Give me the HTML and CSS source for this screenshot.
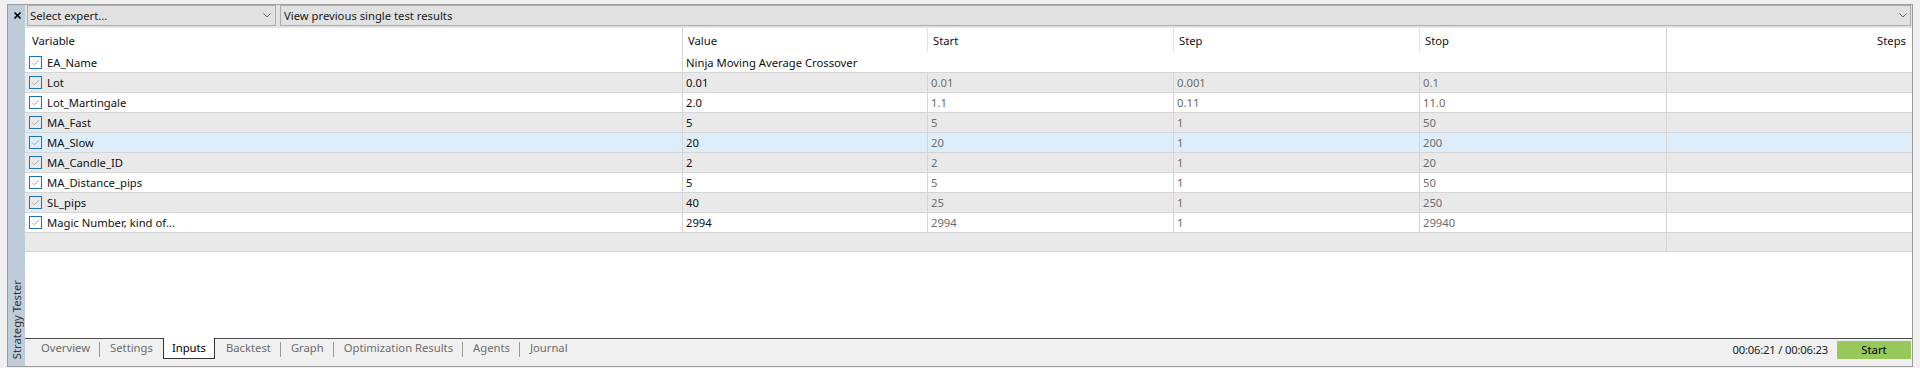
FILE: index.html
```html
<!DOCTYPE html>
<html lang="en">
<head>
<meta charset="utf-8">
<title>Strategy Tester</title>
<link rel="stylesheet" href="styles.css">
</head>
<body>
<div class="frame">
  <aside class="side">
    <svg class="close" width="7" height="7" viewBox="0 0 7 7"><path d="M0.5 0.5 L6.5 6.5 M6.5 0.5 L0.5 6.5" stroke="#000" stroke-width="1.6" fill="none"/></svg>
    <span class="side-title">Strategy Tester</span>
  </aside>
  <div class="main">
    <div class="toolbar">
      <div class="combo combo-expert"><span>Select expert...</span><svg class="chev" width="8" height="5" viewBox="0 0 8 5"><path d="M0.5 0.5 L4 4 L7.5 0.5" stroke="#666" stroke-width="1" fill="none"/></svg></div>
      <div class="combo combo-view"><span>View previous single test results</span><svg class="chev" width="8" height="5" viewBox="0 0 8 5"><path d="M0.5 0.5 L4 4 L7.5 0.5" stroke="#666" stroke-width="1" fill="none"/></svg></div>
    </div>
    <div class="table">
      <div class="row head">
        <div class="cell c-var">Variable</div>
        <div class="cell sep">Value</div>
        <div class="cell sep light">Start</div>
        <div class="cell sep light">Step</div>
        <div class="cell sep light">Stop</div>
        <div class="cell sep steps">Steps</div>
      </div>
      <div class="row first">
        <div class="cell c-var"><svg class="cb" width="13" height="13" viewBox="0 0 13 13"><rect x="0.5" y="0.5" width="12" height="12" fill="none" stroke="#1f72c0"/><path d="M3 6.5 L5.3 8.8 L10 4.2" stroke="#a9a9a9" stroke-width="1" fill="none"/></svg>EA_Name</div>
        <div class="cell sep wide">Ninja Moving Average Crossover</div>
        <div class="cell sep steps"></div>
      </div>
      <div class="row alt">
        <div class="cell c-var"><svg class="cb" width="13" height="13" viewBox="0 0 13 13"><rect x="0.5" y="0.5" width="12" height="12" fill="none" stroke="#1f72c0"/><path d="M3 6.5 L5.3 8.8 L10 4.2" stroke="#a9a9a9" stroke-width="1" fill="none"/></svg>Lot</div>
        <div class="cell sep">0.01</div>
        <div class="cell sep dim">0.01</div>
        <div class="cell sep dim">0.001</div>
        <div class="cell sep dim">0.1</div>
        <div class="cell sep steps"></div>
      </div>
      <div class="row">
        <div class="cell c-var"><svg class="cb" width="13" height="13" viewBox="0 0 13 13"><rect x="0.5" y="0.5" width="12" height="12" fill="none" stroke="#1f72c0"/><path d="M3 6.5 L5.3 8.8 L10 4.2" stroke="#a9a9a9" stroke-width="1" fill="none"/></svg>Lot_Martingale</div>
        <div class="cell sep">2.0</div>
        <div class="cell sep dim">1.1</div>
        <div class="cell sep dim">0.11</div>
        <div class="cell sep dim">11.0</div>
        <div class="cell sep steps"></div>
      </div>
      <div class="row alt">
        <div class="cell c-var"><svg class="cb" width="13" height="13" viewBox="0 0 13 13"><rect x="0.5" y="0.5" width="12" height="12" fill="none" stroke="#1f72c0"/><path d="M3 6.5 L5.3 8.8 L10 4.2" stroke="#a9a9a9" stroke-width="1" fill="none"/></svg>MA_Fast</div>
        <div class="cell sep">5</div>
        <div class="cell sep dim">5</div>
        <div class="cell sep dim">1</div>
        <div class="cell sep dim">50</div>
        <div class="cell sep steps"></div>
      </div>
      <div class="row hover">
        <div class="cell c-var"><svg class="cb" width="13" height="13" viewBox="0 0 13 13"><rect x="0.5" y="0.5" width="12" height="12" fill="none" stroke="#1f72c0"/><path d="M3 6.5 L5.3 8.8 L10 4.2" stroke="#a9a9a9" stroke-width="1" fill="none"/></svg>MA_Slow</div>
        <div class="cell sep">20</div>
        <div class="cell sep dim">20</div>
        <div class="cell sep dim">1</div>
        <div class="cell sep dim">200</div>
        <div class="cell sep steps"></div>
      </div>
      <div class="row alt">
        <div class="cell c-var"><svg class="cb" width="13" height="13" viewBox="0 0 13 13"><rect x="0.5" y="0.5" width="12" height="12" fill="none" stroke="#1f72c0"/><path d="M3 6.5 L5.3 8.8 L10 4.2" stroke="#a9a9a9" stroke-width="1" fill="none"/></svg>MA_Candle_ID</div>
        <div class="cell sep">2</div>
        <div class="cell sep dim">2</div>
        <div class="cell sep dim">1</div>
        <div class="cell sep dim">20</div>
        <div class="cell sep steps"></div>
      </div>
      <div class="row">
        <div class="cell c-var"><svg class="cb" width="13" height="13" viewBox="0 0 13 13"><rect x="0.5" y="0.5" width="12" height="12" fill="none" stroke="#1f72c0"/><path d="M3 6.5 L5.3 8.8 L10 4.2" stroke="#a9a9a9" stroke-width="1" fill="none"/></svg>MA_Distance_pips</div>
        <div class="cell sep">5</div>
        <div class="cell sep dim">5</div>
        <div class="cell sep dim">1</div>
        <div class="cell sep dim">50</div>
        <div class="cell sep steps"></div>
      </div>
      <div class="row alt">
        <div class="cell c-var"><svg class="cb" width="13" height="13" viewBox="0 0 13 13"><rect x="0.5" y="0.5" width="12" height="12" fill="none" stroke="#1f72c0"/><path d="M3 6.5 L5.3 8.8 L10 4.2" stroke="#a9a9a9" stroke-width="1" fill="none"/></svg>SL_pips</div>
        <div class="cell sep">40</div>
        <div class="cell sep dim">25</div>
        <div class="cell sep dim">1</div>
        <div class="cell sep dim">250</div>
        <div class="cell sep steps"></div>
      </div>
      <div class="row">
        <div class="cell c-var"><svg class="cb" width="13" height="13" viewBox="0 0 13 13"><rect x="0.5" y="0.5" width="12" height="12" fill="none" stroke="#1f72c0"/><path d="M3 6.5 L5.3 8.8 L10 4.2" stroke="#a9a9a9" stroke-width="1" fill="none"/></svg>Magic Number, kind of...</div>
        <div class="cell sep">2994</div>
        <div class="cell sep dim">2994</div>
        <div class="cell sep dim">1</div>
        <div class="cell sep dim">29940</div>
        <div class="cell sep steps"></div>
      </div>
      <div class="row alt last">
        <div class="cell c-var"></div>
        <div class="cell wide"></div>
        <div class="cell sep steps"></div>
      </div>
    </div>
    <div class="tabbar">
      <div class="tabs">
        <span class="tab">Overview</span><span class="tsep"></span>
        <span class="tab">Settings</span>
        <span class="tab active">Inputs</span>
        <span class="tab">Backtest</span><span class="tsep"></span>
        <span class="tab">Graph</span><span class="tsep"></span>
        <span class="tab">Optimization Results</span><span class="tsep"></span>
        <span class="tab">Agents</span><span class="tsep"></span>
        <span class="tab">Journal</span>
      </div>
      <div class="status">
        <span class="time">00:06:21 / 00:06:23</span>
        <span class="start">Start</span>
      </div>
    </div>
  </div>
</div>
</body>
</html>
```

FILE: styles.css
```css
* { box-sizing: border-box; }
html, body {
  margin: 0;
  padding: 0;
}
body {
  width: 1920px;
  height: 368px;
  overflow: hidden;
  background: #f0f0f0;
  padding: 4px 7px 1px 7px;
  font-family: "Noto Sans", "Open Sans", sans-serif;
  font-size: 11.25px;
  color: #111;
}
.frame {
  display: flex;
  height: 363px;
  border: 1px solid #9c9c9c;
}
.side {
  width: 17px;
  flex: none;
  background: #bfcddb;
  display: flex;
  flex-direction: column;
  align-items: center;
}
.close {
  margin-top: 7px;
  margin-left: 1px;
}
.side-title {
  margin-top: auto;
  margin-bottom: 7px;
  writing-mode: vertical-rl;
  transform: rotate(180deg);
  color: #333;
  line-height: 17px;
  white-space: nowrap;
}
.main {
  flex: 1;
  display: flex;
  flex-direction: column;
  min-width: 0;
}
.toolbar {
  height: 23px;
  flex: none;
  background: #e3e3e3;
  display: flex;
  gap: 4px;
  padding: 0 1px 2px 2px;
}
.combo {
  height: 21px;
  border: 1px solid #adadad;
  background: #e1e1e1;
  display: flex;
  align-items: center;
  justify-content: space-between;
  padding: 0 4px 0 2px;
  color: #1a1a1a;
}
.combo-expert { width: 249px; flex: none; }
.combo-view { flex: 1; padding-left: 3px; padding-right: 3px; }
.chev { flex: none; }
.table {
  flex: 1;
  background: #fff;
}
.row {
  display: grid;
  grid-template-columns: 657px 245px 246px 246px 247px 1fr;
  height: 20px;
  border-top: 1px solid #d5d5d5;
  background: #fff;
}
.row.head {
  height: 24px;
  border-top: 0;
}
.row.first {
  border-top: 0;
}
.row.alt { background: #e9e9e9; }
.row.hover { background: #deedfa; }
.row.last { border-bottom: 1px solid #d5d5d5; }
.cell {
  display: flex;
  align-items: center;
  padding-left: 3px;
  white-space: nowrap;
  overflow: hidden;
}
.cell.sep { border-left: 1px solid #d5d5d5; }
.head .cell { padding-left: 5px; }
.head .cell.c-var { padding-left: 7px; }
.head .cell.sep { border-left-color: #e2e2e2; }
.head .cell.sep:nth-child(2), .head .cell.steps { border-left-color: #d5d5d5; }
.cell.wide { grid-column: 2 / span 4; }
.cell.steps { justify-content: flex-end; padding-right: 6px; }
.cell.c-var { padding-left: 4px; }
.cb { flex: none; margin-right: 5px; }
.dim { color: #6d6d6d; }
.tabbar {
  height: 28px;
  flex: none;
  border-top: 1px solid #4f4f4f;
  background: #f0f0f0;
  display: flex;
  justify-content: space-between;
  align-items: flex-start;
}
.tabs {
  display: flex;
  align-items: flex-start;
  margin-top: -1px;
  padding-left: 6px;
}
.tab {
  height: 21px;
  line-height: 20px;
  padding: 0 9px 0 10px;
  color: #6d6d6d;
  white-space: nowrap;
}
.tab.active {
  background: #fff;
  color: #000;
  border: 1px solid #333;
  border-top: 0;
  padding: 0 8px;
  margin: 0 1px;
}
.tsep {
  width: 1px;
  height: 15px;
  margin-top: 4px;
  background: #9a9a9a;
}
.status {
  display: flex;
  align-items: center;
  margin-top: 2px;
}
.time {
  line-height: 18px;
  color: #222;
  margin-right: 9px;
  letter-spacing: -0.2px;
}
.start {
  width: 74px;
  height: 18px;
  line-height: 18px;
  text-align: center;
  background: #96c85b;
  color: #000;
  margin-right: 1px;
}
```
